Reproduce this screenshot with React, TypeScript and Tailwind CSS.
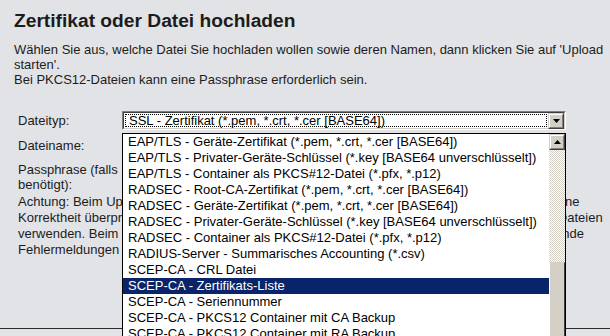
import React from "react";

const items = [
  "EAP/TLS - Geräte-Zertifikat (*.pem, *.crt, *.cer [BASE64])",
  "EAP/TLS - Privater-Geräte-Schlüssel (*.key [BASE64 unverschlüsselt])",
  "EAP/TLS - Container als PKCS#12-Datei (*.pfx, *.p12)",
  "RADSEC - Root-CA-Zertifikat (*.pem, *.crt, *.cer [BASE64])",
  "RADSEC - Geräte-Zertifikat (*.pem, *.crt, *.cer [BASE64])",
  "RADSEC - Privater-Geräte-Schlüssel (*.key [BASE64 unverschlüsselt])",
  "RADSEC - Container als PKCS#12-Datei (*.pfx, *.p12)",
  "RADIUS-Server - Summarisches Accounting (*.csv)",
  "SCEP-CA - CRL Datei",
  "SCEP-CA - Zertifikats-Liste",
  "SCEP-CA - Seriennummer",
  "SCEP-CA - PKCS12 Container mit CA Backup",
  "SCEP-CA - PKCS12 Container mit RA Backup",
];

function Btn({ up }: { up?: boolean }) {
  return (
    <div className="w-[16px] h-[16px] shrink-0 bg-[#d4d0c8] border border-t-[#d4d0c8] border-l-[#d4d0c8] border-r-[#404040] border-b-[#404040] flex">
      <div className="flex-1 border border-t-white border-l-white border-r-[#808080] border-b-[#808080] flex items-center justify-center">
        <svg width="7" height="4" viewBox="0 0 7 4">
          {up ? <path d="M3.5 0 L7 4 L0 4 Z" fill="#000" /> : <path d="M0 0 L7 0 L3.5 4 Z" fill="#000" />}
        </svg>
      </div>
    </div>
  );
}

export default function App() {
  return (
    <div className="relative w-[610px] h-[336px] overflow-hidden bg-[#e2e3e6] text-[#1c1c1c] font-['Liberation_Sans',Arial,sans-serif]">
      <div className="pl-[14px] pr-[4px] pt-[10px]">
        <h1 className="text-[19.2px] font-bold leading-[22px]">Zertifikat oder Datei hochladen</h1>
        <p className="mt-[10px] text-[13px] leading-[15px]">
          Wählen Sie aus, welche Datei Sie hochladen wollen sowie deren Namen, dann klicken Sie auf 'Upload starten'.
          <br />
          Bei PKCS12-Dateien kann eine Passphrase erforderlich sein.
        </p>
      </div>

      <div className="mt-[24px] pl-[18px] text-[13px]">
        <div className="flex items-center h-[19px]">
          <span className="w-[104px]">Dateityp:</span>
          <div className="w-[444px] h-[19px] border border-t-[#808080] border-l-[#808080] border-r-white border-b-white flex">
            <div className="flex-1 flex border border-t-[#404040] border-l-[#404040] border-r-[#d4d0c8] border-b-[#d4d0c8] bg-white">
              <div className="flex-1 m-[1px] border border-dotted border-[#000] flex items-center pl-[3px] text-[13px] text-black whitespace-nowrap">
                SSL - Zertifikat (*.pem, *.crt, *.cer [BASE64])
              </div>
              <Btn />
            </div>
          </div>
        </div>
        <div className="flex items-center h-[20px] mt-[6px]">
          <span className="w-[104px]">Dateiname:</span>
          <div className="w-[300px] h-[20px] bg-white border border-[#808080]" />
        </div>
        <div className="flex mt-[6px] h-[30px]">
          <span className="w-[104px] leading-[15px]">Passphrase (falls benötigt):</span>
          <div className="w-[200px] h-[20px] bg-white border border-[#808080]" />
        </div>
        <p className="mt-[2px] leading-[16px] whitespace-nowrap">
          Achtung: Beim Upload von Zertifikaten und privaten Schlüsseln kann das Gerät bisher noch keine
          <br />
          Korrektheit überprüfen. Bitte deshalb jeweils ausschließlich gültige und zusammengehörende Dateien
          <br />
          verwenden. Beim Hochladen fehlerhafter oder unvollständiger Dateien können ggf. entsprechende
          <br />
          Fehlermeldungen im Systemprotokoll erscheinen.
        </p>
      </div>
      <div className="mt-[70px] border-t border-[#2a2a2a]" />

      <div className="absolute left-[122px] top-[133px] w-[444px] h-[220px] bg-white border border-black flex text-[13px] text-black">
        <div className="flex-1 min-w-0 overflow-hidden">
          {items.map((t, i) => (
            <div
              key={t}
              className={
                "h-[16px] leading-[16px] pl-[5px] whitespace-nowrap " +
                (i === 9 ? "bg-[#0a246a] text-white" : "")
              }
            >
              {t}
            </div>
          ))}
        </div>
        <div className="w-[16px] flex flex-col">
          <Btn up />
          <div className="h-[112px] shrink-0 bg-[repeating-conic-gradient(#d4d0c8_0%_25%,#ffffff_0%_50%)] bg-[length:2px_2px]" />
          <div className="flex-1 bg-[#d4d0c8] border border-t-[#d4d0c8] border-l-white border-r-[#404040] border-b-[#404040]" />
        </div>
      </div>
    </div>
  );
}
